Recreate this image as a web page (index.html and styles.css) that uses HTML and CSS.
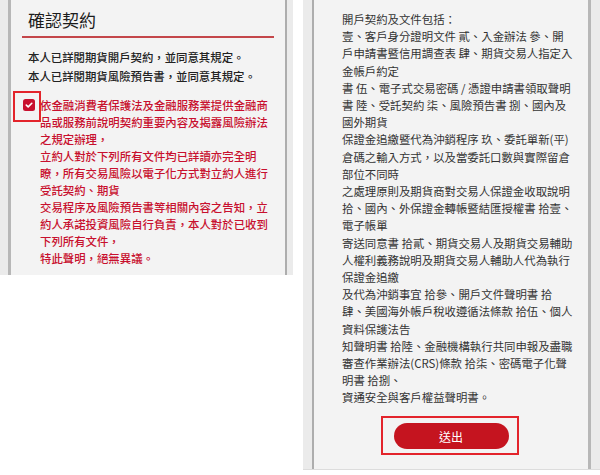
FILE: index.html
```html
<!DOCTYPE html>
<html lang="zh-Hant">
<head>
<meta charset="utf-8">
<title>確認契約</title>
<link rel="stylesheet" href="styles.css">
</head>
<body>
<div class="shots">
	<section class="shot shot-left">
		<div class="card card-left">
			<h2 class="card-title">確認契約</h2>
			<p class="agree">本人已詳閱期貨開戶契約，並同意其規定。<br>本人已詳閱期貨風險預告書，並同意其規定。</p>
			<label class="confirm">
				<span class="check">
					<svg width="12" height="12" viewBox="0 0 12 12"><path d="M3.3 6.1 L5.2 7.9 L8.8 4.3" fill="none" stroke="#fff" stroke-width="1.6" stroke-linecap="round" stroke-linejoin="round"/></svg>
					<span class="mark"></span>
				</span>
				<span class="confirm-text">依金融消費者保護法及金融服務業提供金融商<br>品或服務前說明契約重要內容及揭露風險辦法<br>之規定辦理，<br>立約人對於下列所有文件均已詳讀亦完全明<br>瞭，所有交易風險以電子化方式對立約人進行<br>受託契約、期貨<br>交易程序及風險預告書等相關內容之告知，立<br>約人承諾投資風險自行負責，本人對於已收到<br>下列所有文件，<br>特此聲明，絕無異議。</span>
			</label>
		</div>
	</section>
	<section class="shot shot-right">
		<div class="card card-right">
			<p class="docs">開戶契約及文件包括：<br>壹、客戶身分證明文件 貳、入金辦法 參、開<br>戶申請書暨信用調查表 肆、期貨交易人指定入<br>金帳戶約定<br>書 伍、電子式交易密碼 / 憑證申請書領取聲明<br>書 陸、受託契約 柒、風險預告書 捌、國內及<br>國外期貨<br>保證金追繳暨代為沖銷程序 玖、委託單新(平)<br>倉碼之輸入方式，以及當委託口數與實際留倉<br>部位不同時<br>之處理原則及期貨商對交易人保證金收取說明<br>拾、國內、外保證金轉帳暨結匯授權書 拾壹、<br>電子帳單<br>寄送同意書 拾貳、期貨交易人及期貨交易輔助<br>人權利義務說明及期貨交易人輔助人代為執行<br>保證金追繳<br>及代為沖銷事宜 拾參、開戶文件聲明書 拾<br>肆、美國海外帳戶稅收遵循法條款 拾伍、個人<br>資料保護法告<br>知聲明書 拾陸、金融機構執行共同申報及盡職<br>審查作業辦法(CRS)條款 拾柒、密碼電子化聲<br>明書 拾捌、<br>資通安全與客戶權益聲明書。</p>
			<div class="actions">
				<span class="submit-wrap">
					<button class="submit" type="button">送出</button>
					<span class="mark"></span>
				</span>
			</div>
		</div>
	</section>
</div>
</body>
</html>
```

FILE: styles.css
```css
body { margin: 0; background: #fff; font-family: "Noto Sans CJK TC", "Noto Sans", sans-serif; }
.shots { display: flex; gap: 10px; align-items: flex-start; }
.shot { background: #ebebeb; box-sizing: border-box; display: flex; overflow: hidden; }
.shot-left { width: 293px; height: 275px; padding-left: 8px; }
.shot-right { width: 297px; height: 470px; padding-left: 9px; border-bottom: 1px solid #dcdcdc; }
.card { flex: none; width: 274px; background: #f3f3f3; }
.card-left { border-left: 3px solid #b7b7b7; border-right: 2px solid #adadad; box-sizing: content-box; padding: 0; }
.card-right { border-left: 2px solid #adadad; border-right: 3px solid #b7b7b7; }

.card-title { margin: 0 11px; padding: 8px 6px 4px; font-size: 17px; line-height: 24px; font-weight: 400; color: #1c1c1c; border-bottom: 2px solid #c4464a; }
.agree { margin: 10px 17px 0; font-size: 11.4px; line-height: 19px; color: #222; font-weight: 500; }
.confirm { display: flex; gap: 5px; margin-top: 10.5px; padding-left: 12px; }
.check { flex: none; position: relative; width: 12px; height: 12px; margin-top: 2.5px; background: #c8102e; border-radius: 2.5px; }
.check svg { display: block; }
.check .mark { position: absolute; left: -10px; top: -8px; width: 28px; height: 31px; box-sizing: border-box; border: 2px solid #e3242b; }
.confirm-text { font-size: 11.4px; line-height: 17px; color: #c8102e; font-weight: 500; }

.docs { margin: 0; padding: 11px 0 0 28px; font-size: 11.4px; line-height: 17.2px; color: #333; }
.actions { display: flex; justify-content: center; margin-top: 16.4px; }
.submit-wrap { position: relative; display: block; }
.submit { display: block; width: 115px; height: 26px; border: 0; border-radius: 13px; background: #c5141f; color: #fff; font-family: inherit; font-size: 12px; padding: 0; }
.submit-wrap .mark { position: absolute; left: -13px; top: -7px; right: -10px; bottom: -6px; border: 2px solid #e3242b; }
```
